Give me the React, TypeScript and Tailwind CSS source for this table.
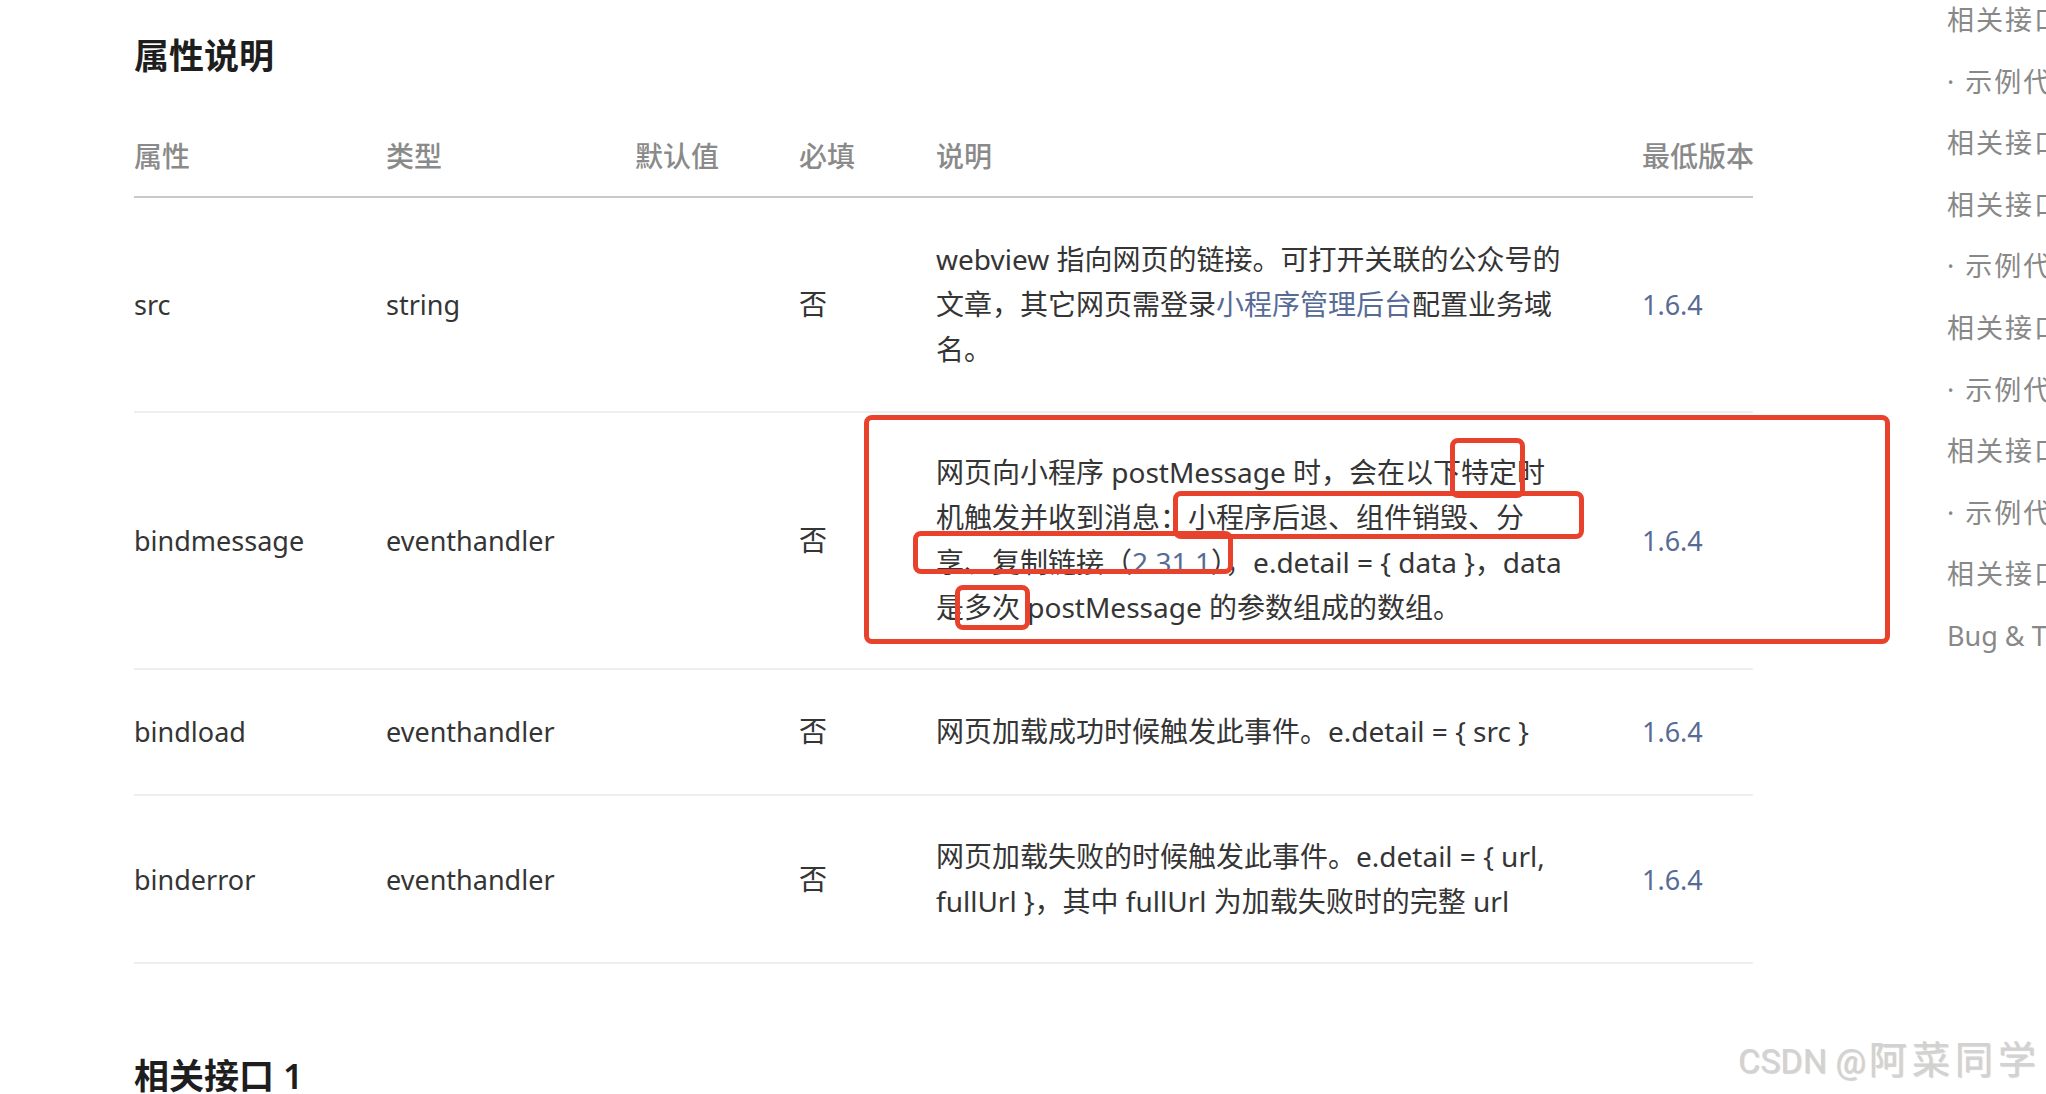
import React from "react";

const cols = "grid grid-cols-[252px_249px_164px_137px_706px_111px]";

function Link({ children }: { children: React.ReactNode }) {
  return <span className="text-[#576b95]">{children}</span>;
}

type Row = {
  name: string;
  type: string;
  req: string;
  desc: React.ReactNode;
  ver: string;
  pad: string;
};

const rows: Row[] = [
  {
    name: "src",
    type: "string",
    req: "否",
    desc: (
      <>
        webview 指向网页的链接。可打开关联的公众号的
        <br />
        文章，其它网页需登录<Link>小程序管理后台</Link>配置业务域
        <br />
        名。
      </>
    ),
    ver: "1.6.4",
    pad: "pt-[39px] pb-[39px]",
  },
  {
    name: "bindmessage",
    type: "eventhandler",
    req: "否",
    desc: (
      <>
        网页向小程序 postMessage 时，会在以下特定时
        <br />
        机触发并收到消息：小程序后退、组件销毁、分
        <br />
        享、复制链接（<Link>2.31.1</Link>），e.detail = {"{"} data {"}"}，data
        <br />
        是多次 postMessage 的参数组成的数组。
      </>
    ),
    ver: "1.6.4",
    pad: "pt-[37px] pb-[38px]",
  },
  {
    name: "bindload",
    type: "eventhandler",
    req: "否",
    desc: <>网页加载成功时候触发此事件。e.detail = {"{"} src {"}"}</>,
    ver: "1.6.4",
    pad: "pt-[39px] pb-[40px]",
  },
  {
    name: "binderror",
    type: "eventhandler",
    req: "否",
    desc: (
      <>
        网页加载失败的时候触发此事件。e.detail = {"{"} url,
        <br />
        fullUrl {"}"}，其中 fullUrl 为加载失败时的完整 url
      </>
    ),
    ver: "1.6.4",
    pad: "pt-[38px] pb-[38px]",
  },
];

const side = [
  "相关接口 1",
  "· 示例代码",
  "相关接口 2",
  "相关接口 3",
  "· 示例代码",
  "相关接口 4",
  "· 示例代码",
  "相关接口 5",
  "· 示例代码",
  "相关接口 6",
];

export default function App() {
  return (
    <div className="relative w-[2046px] h-[1094px] overflow-hidden bg-white font-['Noto_Sans','Noto_Sans_CJK_SC',sans-serif] text-[#353535]">
      <div className="flex">
        {/* main */}
        <div className="ml-[134px] w-[1619px] shrink-0 pt-[31px]">
          <h2 className="text-[35px] leading-[50px] font-semibold text-[#1e1e1e] whitespace-nowrap">
            属性说明
          </h2>
          <div
            className={`${cols} mt-[34px] h-[83px] items-center border-b-2 border-[#c9c9c9] text-[28px] font-medium text-[#8a8a8a] whitespace-nowrap`}
          >
            <div>属性</div>
            <div>类型</div>
            <div>默认值</div>
            <div>必填</div>
            <div>说明</div>
            <div>最低版本</div>
          </div>
          {rows.map((r) => (
            <div
              key={r.name}
              className={`${cols} ${r.pad} items-center border-b-2 border-[#efefef] text-[28px] leading-[45px] whitespace-nowrap`}
            >
              <div className="text-[27px]">{r.name}</div>
              <div className="text-[27px]">{r.type}</div>
              <div></div>
              <div>{r.req}</div>
              <div>{r.desc}</div>
              <div className="text-[27px] text-[#576b95]">{r.ver}</div>
            </div>
          ))}
          <h2 className="mt-[87px] text-[35px] leading-[50px] font-semibold text-[#1e1e1e] whitespace-nowrap">
            相关接口 1
          </h2>
        </div>
        {/* sidebar */}
        <div className="ml-[194px] -mt-[11px] shrink-0 w-[300px] text-[27px] leading-[61.6px] text-[#888888] whitespace-nowrap">
          {side.map((s, i) => (
            <div key={i} className="tracking-[2px]">
              {s}
            </div>
          ))}
          <div>Bug &amp; Tip</div>
        </div>
      </div>

      {/* red annotation boxes */}
      <div className="absolute left-[864px] top-[415px] w-[1026px] h-[229px] rounded-[8px] border-[5px] border-[#e8412c]" />
      <div className="absolute left-[1450px] top-[438px] w-[75px] h-[60px] rounded-[8px] border-[5px] border-[#e8412c]" />
      <div className="absolute left-[1173px] top-[491px] w-[411px] h-[48px] rounded-[8px] border-[5px] border-[#e8412c]" />
      <div className="absolute left-[913px] top-[531px] w-[320px] h-[43px] rounded-[8px] border-[5px] border-[#e8412c]" />
      <div className="absolute left-[955px] top-[585px] w-[75px] h-[45px] rounded-[8px] border-[5px] border-[#e8412c]" />

      {/* watermark */}
      <div className="absolute left-[1738px] top-[1033px] flex items-baseline text-[34px] leading-[48px] whitespace-nowrap text-[#d2d2d2] [text-shadow:1px_1px_1px_rgba(0,0,0,0.18)]">
        <span className="font-['Roboto',sans-serif]">CSDN @</span>
        <span className="ml-[3px] text-[38px] tracking-[5px] font-['Noto_Sans_CJK_SC',sans-serif]">阿菜同学</span>
      </div>
    </div>
  );
}
